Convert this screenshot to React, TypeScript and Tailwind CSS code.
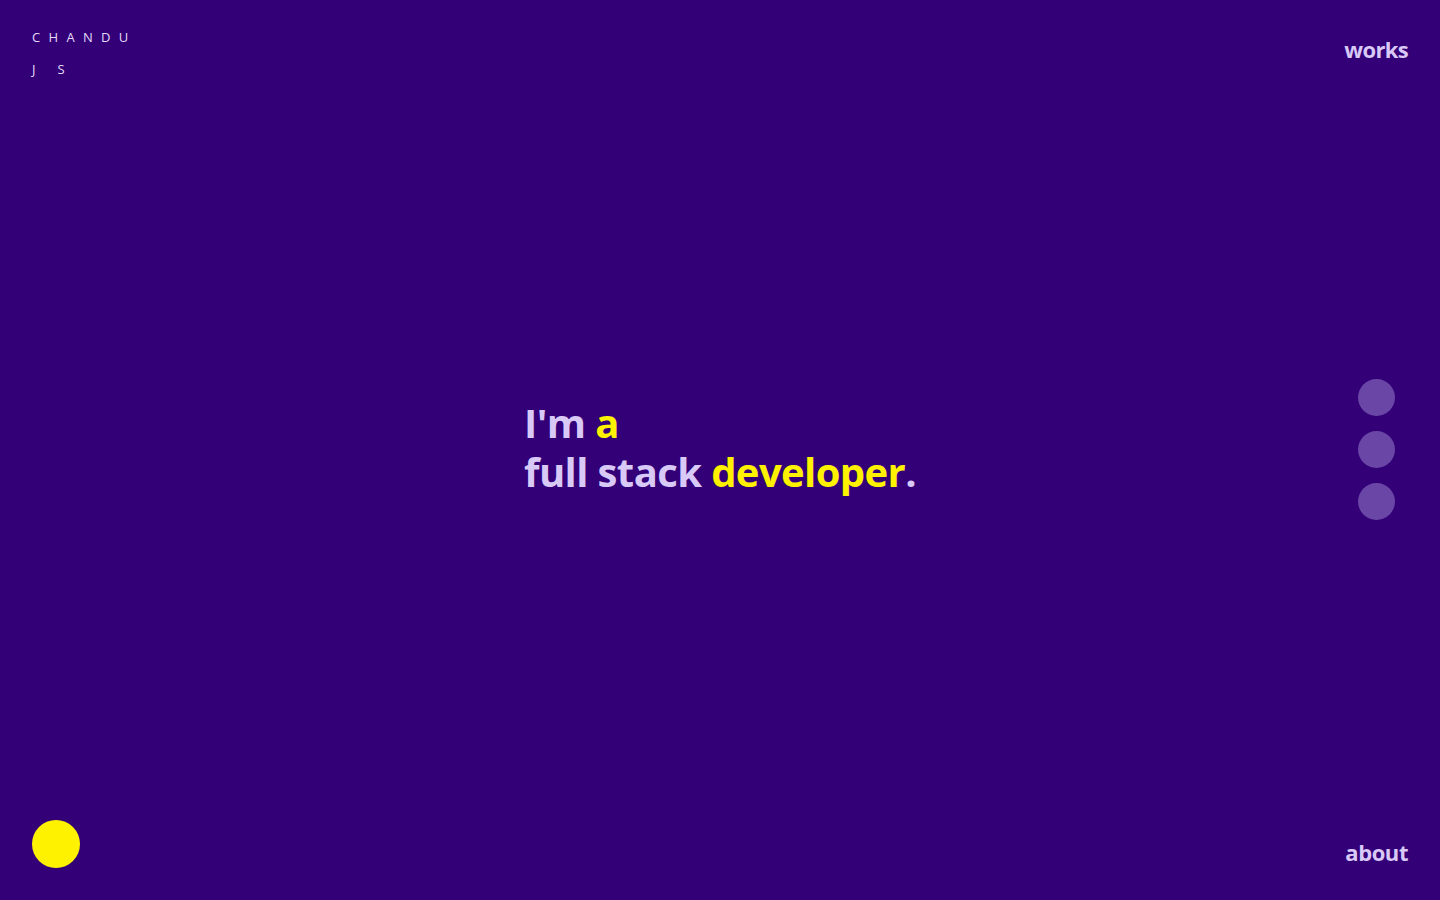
const dots = [0, 1, 2];

export default function App() {
  return (
    <div
      className="flex h-screen w-full flex-col bg-[#330077] px-8 py-8 text-[#d8c9f7]"
      style={{ fontFamily: "'Open Sans', Lato, sans-serif" }}
    >
      {/* top bar */}
      <header className="flex items-start justify-between">
        <div className="-mt-[4px] flex flex-col gap-[14px] text-[13px] leading-[18px] tracking-[0.64em] text-[#e4dafa]">
          <span>CHANDU</span>
          <span className="tracking-[1.7em]">JS</span>
        </div>
        <a className="mt-[2px] text-[22px] font-bold leading-[30px] tracking-[-0.03em] text-[#d8c9f7]">
          works
        </a>
      </header>

      {/* hero */}
      <main className="grid flex-1 grid-cols-[1fr_auto_1fr] items-center">
        <div />
        <h1 className="-mt-[4px] text-[40px] font-bold leading-[49px] tracking-[-0.015em]">
          I'm <span className="text-[#fff200]">a</span>
          <br />
          full stack <span className="text-[#fff200]">developer</span>.
        </h1>
        <div className="flex flex-col items-end gap-[15px] pr-[13px]">
          {dots.map((d) => (
            <span key={d} className="h-[37px] w-[37px] rounded-full bg-[#6a47a6]" />
          ))}
        </div>
      </main>

      {/* bottom bar */}
      <footer className="flex items-center justify-between">
        <span className="h-12 w-12 rounded-full bg-[#fff200]" />
        <a className="mt-[16px] text-[22px] font-bold leading-[30px] tracking-[-0.02em] text-[#d8c9f7]">about</a>
      </footer>
    </div>
  );
}
